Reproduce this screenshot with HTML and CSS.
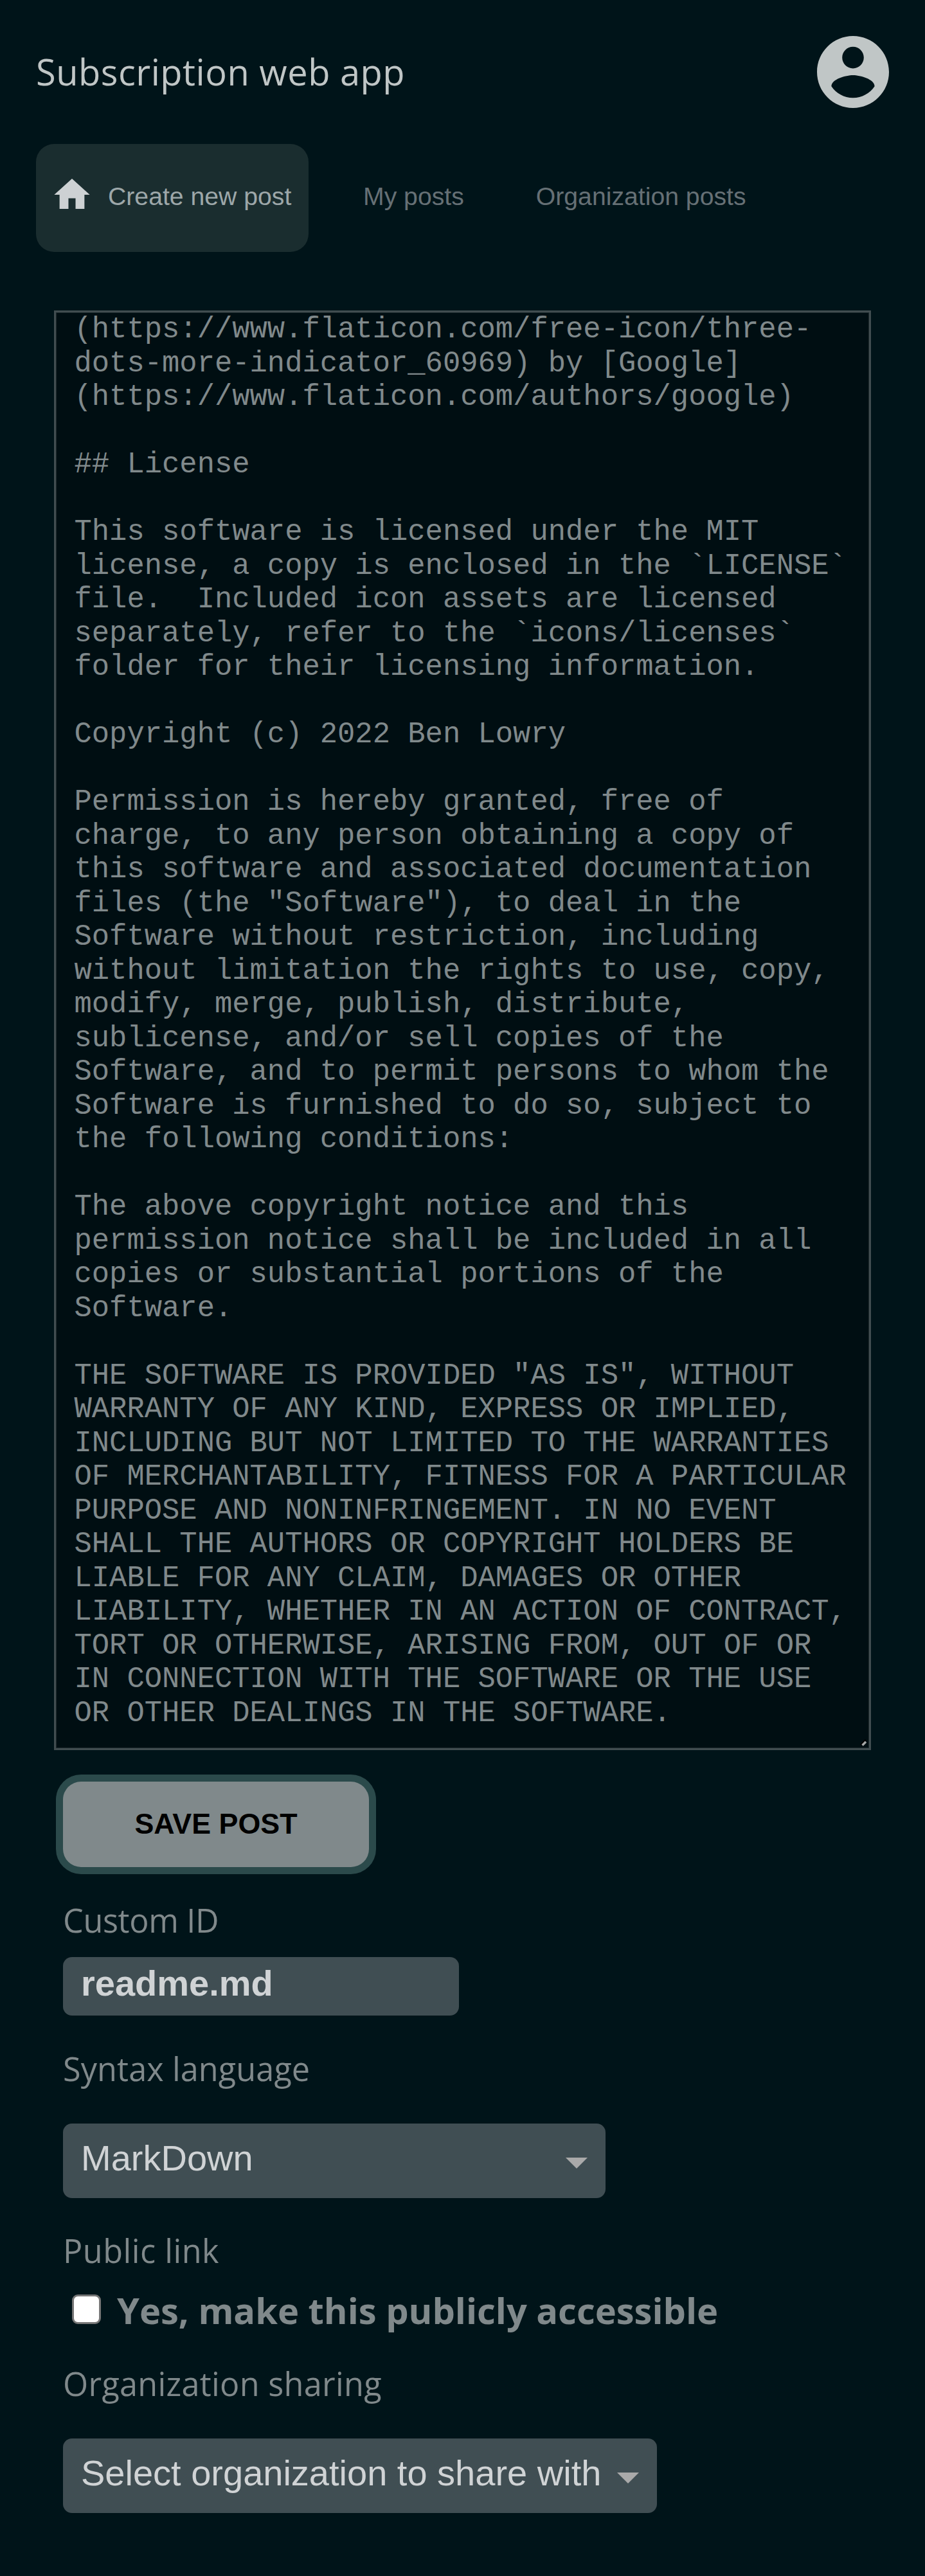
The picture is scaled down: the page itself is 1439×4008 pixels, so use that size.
FILE: index.html
```
<!DOCTYPE html>
<html lang="en">
<head>
<meta charset="utf-8">
<title>Subscription web app</title>
<link rel="stylesheet" href="styles.css">
</head>
<body>
<header class="header">
  <h1 class="title">Subscription web app</h1>
  <svg class="avatar" viewBox="2 2 20 20"><path d="M12 2C6.48 2 2 6.48 2 12s4.48 10 10 10 10-4.48 10-10S17.52 2 12 2zm0 3c1.66 0 3 1.34 3 3s-1.34 3-3 3-3-1.34-3-3 1.34-3 3-3zm0 14.2c-2.5 0-4.71-1.28-6-3.22.03-1.99 4-3.08 6-3.08 1.99 0 5.97 1.09 6 3.08-1.29 1.94-3.5 3.22-6 3.22z"/></svg>
</header>
<nav class="tabs">
  <a class="tab tab-active"><svg class="home" viewBox="2 3 20 17"><path d="M10 20v-6h4v6h5v-8h3L12 3 2 12h3v8z"/></svg><span>Create new post</span></a>
  <a class="tab">My posts</a>
  <a class="tab">Organization posts</a>
</nav>
<main class="form">
  <div class="editor"><pre class="code">(https://www.flaticon.com/free-icon/three-
dots-more-indicator_60969) by [Google]
(https://www.flaticon.com/authors/google)

## License

This software is licensed under the MIT
license, a copy is enclosed in the `LICENSE`
file.  Included icon assets are licensed
separately, refer to the `icons/licenses`
folder for their licensing information.

Copyright (c) 2022 Ben Lowry

Permission is hereby granted, free of
charge, to any person obtaining a copy of
this software and associated documentation
files (the "Software"), to deal in the
Software without restriction, including
without limitation the rights to use, copy,
modify, merge, publish, distribute,
sublicense, and/or sell copies of the
Software, and to permit persons to whom the
Software is furnished to do so, subject to
the following conditions:

The above copyright notice and this
permission notice shall be included in all
copies or substantial portions of the
Software.

THE SOFTWARE IS PROVIDED "AS IS", WITHOUT
WARRANTY OF ANY KIND, EXPRESS OR IMPLIED,
INCLUDING BUT NOT LIMITED TO THE WARRANTIES
OF MERCHANTABILITY, FITNESS FOR A PARTICULAR
PURPOSE AND NONINFRINGEMENT. IN NO EVENT
SHALL THE AUTHORS OR COPYRIGHT HOLDERS BE
LIABLE FOR ANY CLAIM, DAMAGES OR OTHER
LIABILITY, WHETHER IN AN ACTION OF CONTRACT,
TORT OR OTHERWISE, ARISING FROM, OUT OF OR
IN CONNECTION WITH THE SOFTWARE OR THE USE
OR OTHER DEALINGS IN THE SOFTWARE.</pre>
    <svg class="grip" viewBox="0 0 12 12"><path class="grip-shadow" d="M1 9L9 1"/><path class="grip-line" d="M3.5 9.5L9 4"/></svg>
  </div>
  <div class="fields">
    <button class="save">SAVE POST</button>
    <div class="label label-id">Custom ID</div>
    <div class="input">readme.md</div>
    <div class="label label-syntax">Syntax language</div>
    <div class="select select-syntax"><span>MarkDown</span><i class="arrow"></i></div>
    <div class="label label-public">Public link</div>
    <div class="check"><span class="box"></span><b>Yes, make this publicly accessible</b></div>
    <div class="label label-org">Organization sharing</div>
    <div class="select select-org"><span>Select organization to share with</span><i class="arrow"></i></div>
  </div>
</main>
</body>
</html>
```
FILE: styles.css
```
* { box-sizing: border-box; }

body {
  margin: 0;
  min-height: 4008px;
  background: #001419;
  color: #80898b;
  font-family: "Open Sans", "Noto Sans", sans-serif;
  font-size: 56px;
}

.header {
  display: flex;
  justify-content: space-between;
  align-items: center;
  height: 224px;
  padding: 0 56px;
}

.title {
  margin: 0;
  padding-bottom: 2px;
  font-size: 56px;
  font-weight: 400;
  line-height: 76px;
  letter-spacing: 0.5px;
  color: #c0c6c6;
}

.avatar { width: 112px; height: 112px; fill: #c0c6c6; }

.tabs {
  display: flex;
  gap: 56px;
  height: 168px;
  padding-left: 56px;
  font-family: "Liberation Sans", Arial, sans-serif;
  font-size: 39.2px;
  line-height: 44px;
}

.tab {
  display: flex;
  align-items: center;
  padding: 0 28px 5px;
  white-space: nowrap;
  color: #667075;
}

.tab-active { width: 424px; margin-right: 1px; border-radius: 28px; background: #1a2d2f; color: #9da7a9; }
.home { flex: none; width: 56px; height: 47px; margin: -9px 28px 0 0; fill: #cdd1d3; }

.form { padding: 91px 84px 0; }

.editor {
  position: relative;
  width: 1271px;
  height: 2240px;
  padding: 1px 0 0 28.5px;
  overflow: hidden;
  border: 3px solid #414d50;
  box-shadow: inset 0 0 0 1px #1f2b2e;
  background: #000e12;
}

.code {
  margin: 0;
  font: 45.5px/52.5px "Liberation Mono", "Courier New", monospace;
  color: #80898b;
}

.grip { position: absolute; right: 2px; bottom: 2px; width: 12px; height: 12px; fill: none; }
.grip-shadow { stroke: #000; stroke-width: 3; }
.grip-line { stroke: #a6a8a8; stroke-width: 3.4; }

.fields {
  display: flex;
  flex-direction: column;
  align-items: flex-start;
  padding: 49px 0 0 14px;
}

.save {
  width: 476px;
  height: 133px;
  padding: 0 0 2px;
  border: 0;
  border-radius: 28px;
  background: #80898b;
  box-shadow: 0 0 0 11px #2b4a4b;
  color: #000;
  font: bold 44.8px/51px "Liberation Sans", Arial, sans-serif;
}

.label { font-size: 50.4px; font-weight: 400; line-height: 68px; }
.label-id { margin-top: 49px; letter-spacing: -0.35px; }

.input, .select {
  border-radius: 14px;
  background: #404e53;
  color: #d0d3d5;
  font-family: "Liberation Sans", Arial, sans-serif;
  font-size: 56px;
}

.input {
  width: 616px;
  height: 91px;
  margin-top: 23px;
  padding: 9px 28px 0;
  font-weight: 700;
  line-height: 64px;
}

.label-syntax { margin-top: 49px; letter-spacing: 0.1px; }

.select {
  display: flex;
  align-items: center;
  justify-content: space-between;
  height: 116px;
  padding: 0 28px;
  line-height: 64px;
  white-space: nowrap;
}

.select span { padding-bottom: 8px; }
.select-syntax { width: 844px; margin-top: 51px; }
.select-org { width: 924px; margin-top: 51px; }

.arrow {
  margin-top: 6px;
  border: 17.5px solid transparent;
  border-top-color: #aaa;
  border-bottom: 0;
}

.label-public { margin-top: 48px; letter-spacing: 0.5px; }

.check { display: flex; align-items: center; height: 76px; margin-top: 19px; padding-left: 14px; white-space: nowrap; }
.check b { padding-top: 2px; }
.box { width: 45px; height: 46px; margin-right: 25px; border: 3px solid #767676; border-radius: 9px; background: #fff; }
.label-org { margin-top: 44px; letter-spacing: 0.3px; }
```
